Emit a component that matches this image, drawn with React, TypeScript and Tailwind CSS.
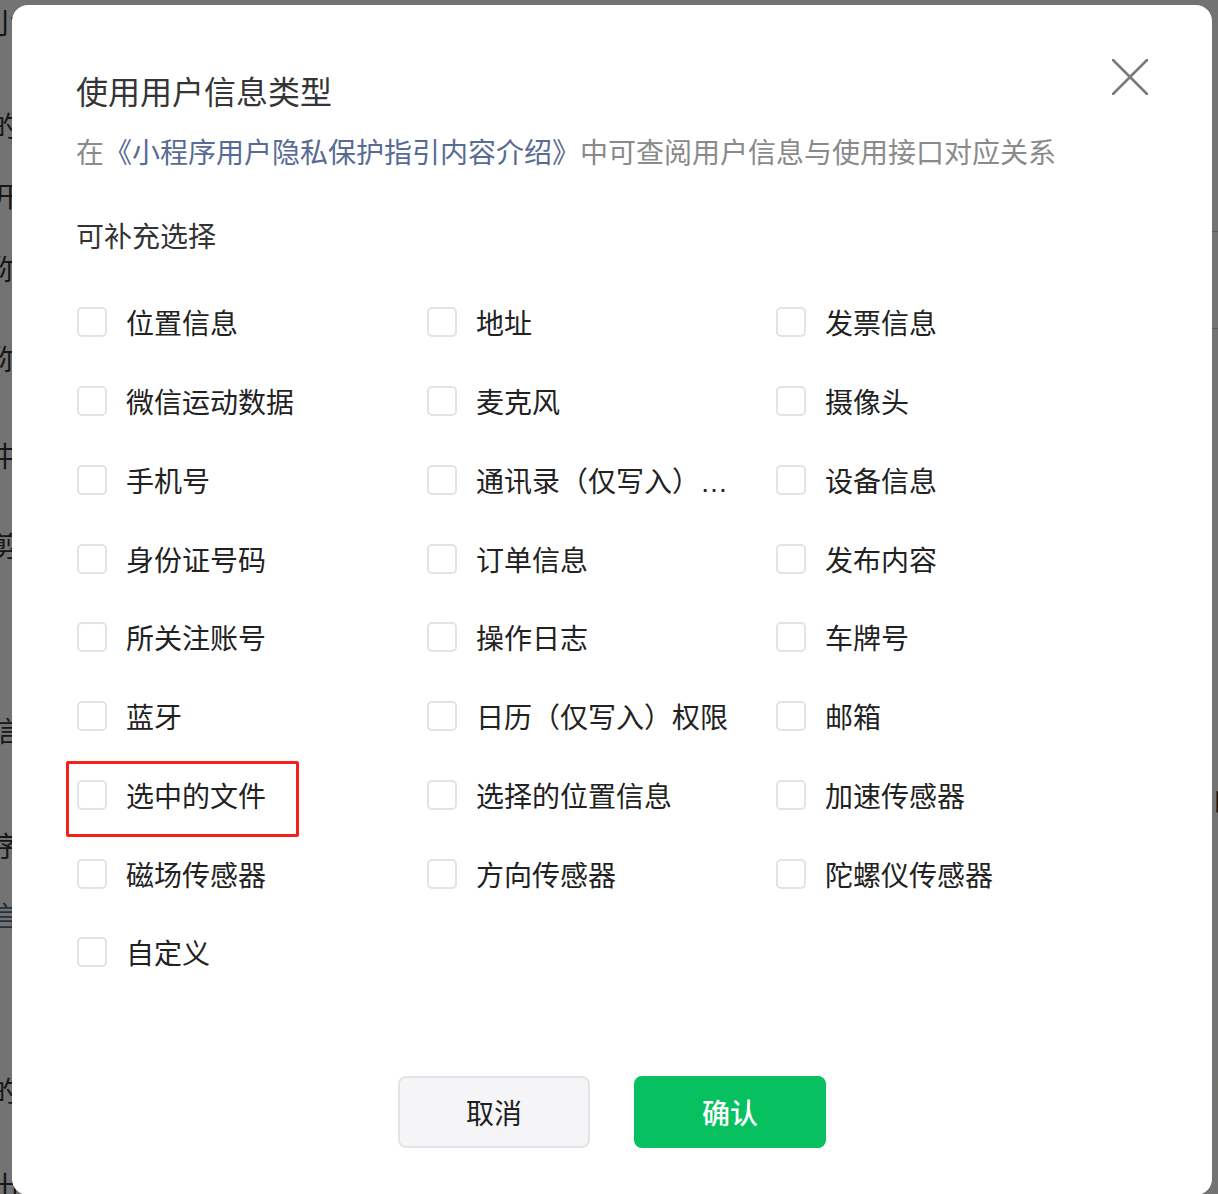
import React from 'react';

const font = "font-['Noto_Sans_CJK_SC','Noto_Sans',sans-serif]";

const items = [
  '位置信息',
  '地址',
  '发票信息',
  '微信运动数据',
  '麦克风',
  '摄像头',
  '手机号',
  '通讯录（仅写入）权限',
  '设备信息',
  '身份证号码',
  '订单信息',
  '发布内容',
  '所关注账号',
  '操作日志',
  '车牌号',
  '蓝牙',
  '日历（仅写入）权限',
  '邮箱',
  '选中的文件',
  '选择的位置信息',
  '加速传感器',
  '磁场传感器',
  '方向传感器',
  '陀螺仪传感器',
  '自定义',
];

const CheckItem = ({ label }: { label: string }) => (
  <label className="flex items-center cursor-pointer">
    <span className="h-[30px] w-[30px] shrink-0 rounded-[5px] border-2 border-[#e3e3e3] bg-white" />
    <span className="ml-[19px] w-[256px] truncate pt-[6px] font-['Liberation_Sans','Noto_Sans_CJK_SC',sans-serif] text-[28px] leading-[40px] text-[#222]">
      {label}
    </span>
  </label>
);

const App = () => {
  return (
    <div className={`relative h-[1194px] w-full overflow-hidden bg-white ${font}`}>
      {/* page behind the dialog */}
      <div className="flex h-full justify-between text-[28px] leading-[28px] text-[#333]">
        <div className="-ml-[9px] flex flex-col">
          <div className="mt-[8px]">小</div>
          <div className="mt-[75px]">的</div>
          <div className="mt-[42px]">开</div>
          <div className="mt-[45px]">你</div>
          <div className="mt-[62px]">你</div>
          <div className="mt-[69px]">中</div>
          <div className="mt-[62px]">剪</div>
          <div className="mt-[157px]">信</div>
          <div className="mt-[87px]">序</div>
          <div className="mt-[42px] text-[#576b95]">言</div>
          <div className="mt-[147px]">的</div>
          <div className="mt-[67px]">出</div>
        </div>
        <div className="flex w-[8px] flex-col">
          <div className="mt-[231px] h-px bg-[#ccc]" />
          <div className="mt-[96px] h-px bg-[#ccc]" />
          <div className="mt-[456px] pl-[4px]">的</div>
          <div className="mt-[262px] pl-[4px]">目</div>
        </div>
      </div>

      {/* overlay */}
      <div className="absolute inset-0 flex items-start bg-black/55 pl-[12px] pt-[5px]">
        <div className="relative flex h-[1190px] w-[1200px] flex-col rounded-2xl bg-white pl-[64px] pt-[63px]">
          <button className="absolute right-[64px] top-[54px] h-[36px] w-[36px]">
            <svg viewBox="0 0 36 36" className="h-full w-full" fill="none">
              <path d="M1 1L35 35M35 1L1 35" stroke="#7a7a7a" strokeWidth="2.6" strokeLinecap="round" />
            </svg>
          </button>

          <h2 className="h-[44px] text-[32px] font-normal leading-[44px] text-[#353535]">
            使用用户信息类型
          </h2>
          <p className="mt-[19px] h-[40px] text-[28px] leading-[40px] text-[#8a8a8a]">
            在<a className="text-[#576b95]">《小程序用户隐私保护指引内容介绍》</a>中可查阅用户信息与使用接口对应关系
          </p>

          <div className="mt-[44px] h-[40px] text-[28px] leading-[40px] text-[#333]">可补充选择</div>

          <div className="mt-[28px] grid grid-cols-[350px_349px_1fr] auto-rows-[78.75px] items-center pl-px">
            {items.map((label) => (
              <CheckItem key={label} label={label} />
            ))}
          </div>

          <div className="mt-[84px] flex justify-center gap-[44px] pr-[64px]">
            <button className="h-[72px] w-[192px] rounded-lg border-2 border-[#e4e4e6] bg-[#f5f5f7] text-[28px] text-[#1f1f1f]">
              取消
            </button>
            <button className="h-[72px] w-[192px] rounded-lg bg-[#07c160] text-[28px] font-medium text-white">
              确认
            </button>
          </div>

          {/* annotation */}
          <div className="pointer-events-none absolute left-[54px] top-[756px] h-[76px] w-[233px] rounded-[2px] border-[3px] border-[#f5201a]" />
        </div>
      </div>
    </div>
  );
};

export default App;
